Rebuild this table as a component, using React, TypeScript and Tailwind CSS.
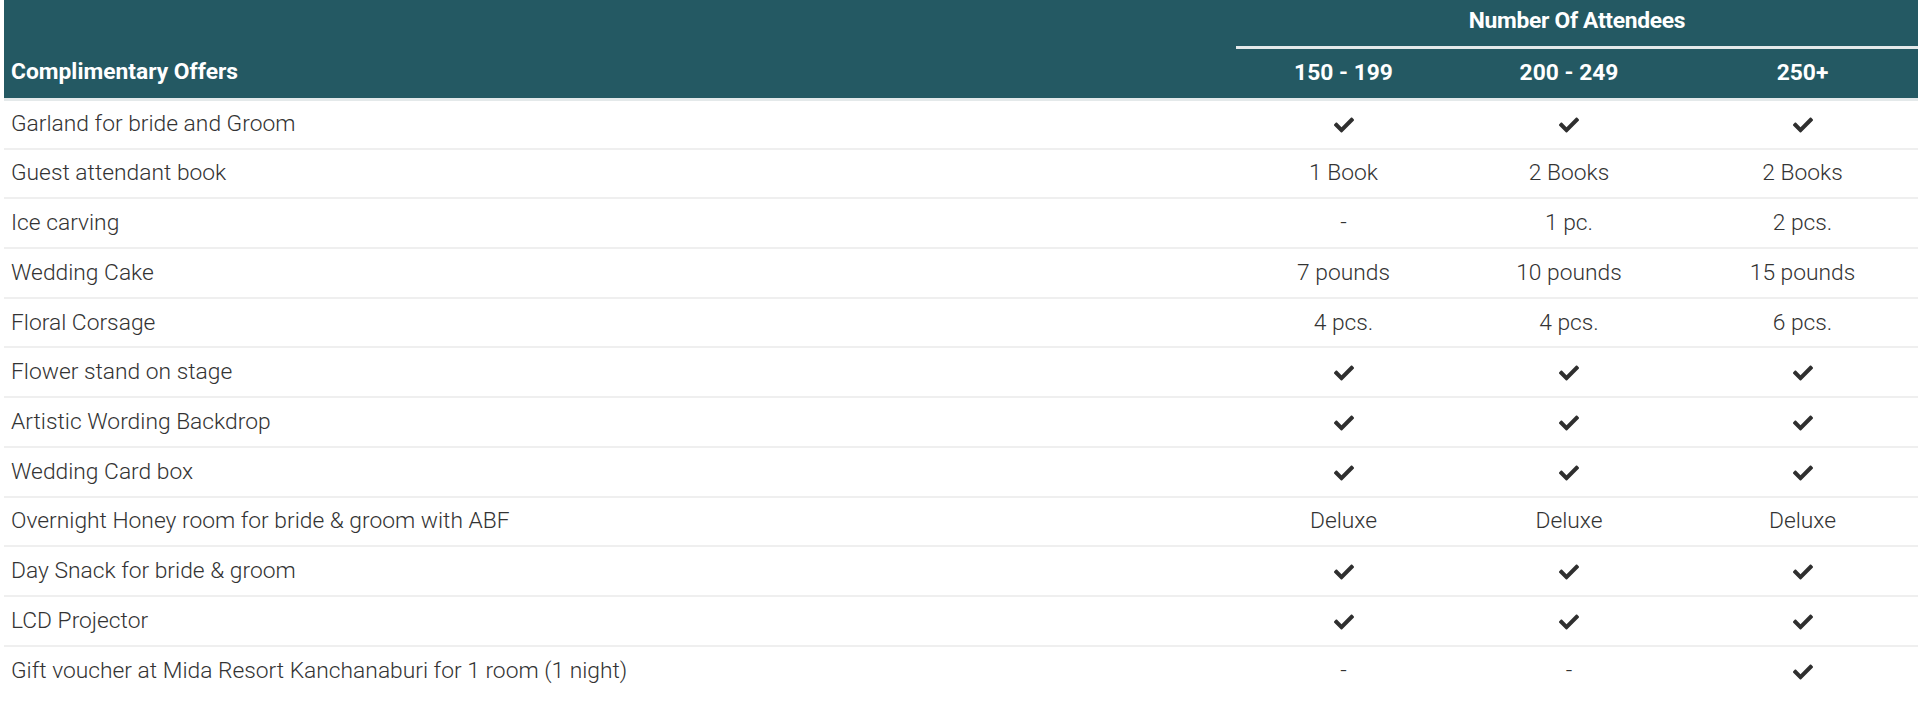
import React from 'react';
import { FaCheck } from 'react-icons/fa';

type Cell = string | true;

const rows: { label: string; values: Cell[] }[] = [
  { label: 'Garland for bride and Groom', values: [true, true, true] },
  { label: 'Guest attendant book', values: ['1 Book', '2 Books', '2 Books'] },
  { label: 'Ice carving', values: ['-', '1 pc.', '2 pcs.'] },
  { label: 'Wedding Cake', values: ['7 pounds', '10 pounds', '15 pounds'] },
  { label: 'Floral Corsage', values: ['4 pcs.', '4 pcs.', '6 pcs.'] },
  { label: 'Flower stand on stage', values: [true, true, true] },
  { label: 'Artistic Wording Backdrop', values: [true, true, true] },
  { label: 'Wedding Card box', values: [true, true, true] },
  { label: 'Overnight Honey room for bride & groom with ABF', values: ['Deluxe', 'Deluxe', 'Deluxe'] },
  { label: 'Day Snack for bride & groom', values: [true, true, true] },
  { label: 'LCD Projector', values: [true, true, true] },
  { label: 'Gift voucher at Mida Resort Kanchanaburi for 1 room (1 night)', values: ['-', '-', true] },
];

export default function App() {
  return (
    <div className="w-full min-h-[712px] bg-white px-1 font-['Roboto',sans-serif] text-[22.8px]">
      <table className="w-[1914px] border-collapse table-fixed">
        <colgroup>
          <col className="w-[1232px]" />
          <col className="w-[215px]" />
          <col className="w-[236px]" />
          <col className="w-[231px]" />
        </colgroup>
        <thead className="bg-[#245963] text-white">
          <tr>
            <th className="h-[47px] p-0" />
            <th colSpan={3} className="h-[47px] p-0 text-center align-middle font-bold tracking-[-0.3px] pb-[3px]">
              Number Of Attendees
            </th>
          </tr>
          <tr className="border-b-[3px] border-[#e4e9ea]">
            <th className="h-[52px] pl-[7px] pr-2 text-left align-middle font-bold">Complimentary Offers</th>
            {['150 - 199', '200 - 249', '250+'].map((h) => (
              <th key={h} className="h-[52px] p-0 text-center align-middle font-bold border-t-[3px] border-[#e4e9ea]">
                {h}
              </th>
            ))}
          </tr>
        </thead>
        <tbody className="text-[#333333] font-light">
          {rows.map((r, i) => (
            <tr key={r.label} className={i < rows.length - 1 ? 'border-b-2 border-[#efefef]' : ''}>
              <td className="h-[49.7px] pl-[7px] pr-2 align-middle">{r.label}</td>
              {r.values.map((v, j) => (
                <td key={j} className="h-[49.7px] p-0 text-center align-middle">
                  {v === true ? <FaCheck className="inline-block text-[#2f2f2f]" size={20} /> : v}
                </td>
              ))}
            </tr>
          ))}
        </tbody>
      </table>
    </div>
  );
}
